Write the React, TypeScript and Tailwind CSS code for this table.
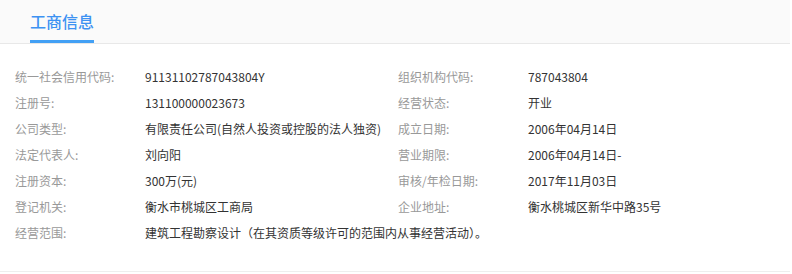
import React from "react";

const rows: [string, string, string?, string?][] = [
  ["统一社会信用代码:", "91131102787043804Y", "组织机构代码:", "787043804"],
  ["注册号:", "131100000023673", "经营状态:", "开业"],
  ["公司类型:", "有限责任公司(自然人投资或控股的法人独资)", "成立日期:", "2006年04月14日"],
  ["法定代表人:", "刘向阳", "营业期限:", "2006年04月14日-"],
  ["注册资本:", "300万(元)", "审核/年检日期:", "2017年11月03日"],
  ["登记机关:", "衡水市桃城区工商局", "企业地址:", "衡水桃城区新华中路35号"],
  ["经营范围:", "建筑工程勘察设计（在其资质等级许可的范围内从事经营活动）。"],
];

export default function App() {
  return (
    <div
      className="w-[790px] bg-white"
      style={{ fontFamily: '"Noto Sans CJK SC", "Microsoft YaHei", sans-serif' }}
    >
      <div className="h-[44px] bg-[#fafafa] border-b border-[#e8e8e8] pl-[30px] flex">
        <div className="flex flex-col">
          <div className="h-[40px] flex items-center text-[16px] leading-none font-medium text-[#3d92f2] pt-[2px]">
            工商信息
          </div>
          <div className="h-[3px] bg-[#42a0f5]" />
        </div>
      </div>
      <div className="pl-[15px] pt-[20px] pb-[25px] border-b border-[#eeeeee] text-[12px] leading-[26px]">
        {rows.map((r, i) => (
          <div key={i} className="flex">
            <div className="w-[130px] text-[#999999] whitespace-nowrap">{r[0]}</div>
            <div className={r[2] ? "w-[253px] text-[#333333] whitespace-nowrap" : "text-[#333333] whitespace-nowrap"}>{r[1]}</div>
            {r[2] && (
              <>
                <div className="w-[130px] text-[#999999] whitespace-nowrap">{r[2]}</div>
                <div className="text-[#333333] whitespace-nowrap">{r[3]}</div>
              </>
            )}
          </div>
        ))}
      </div>
    </div>
  );
}
